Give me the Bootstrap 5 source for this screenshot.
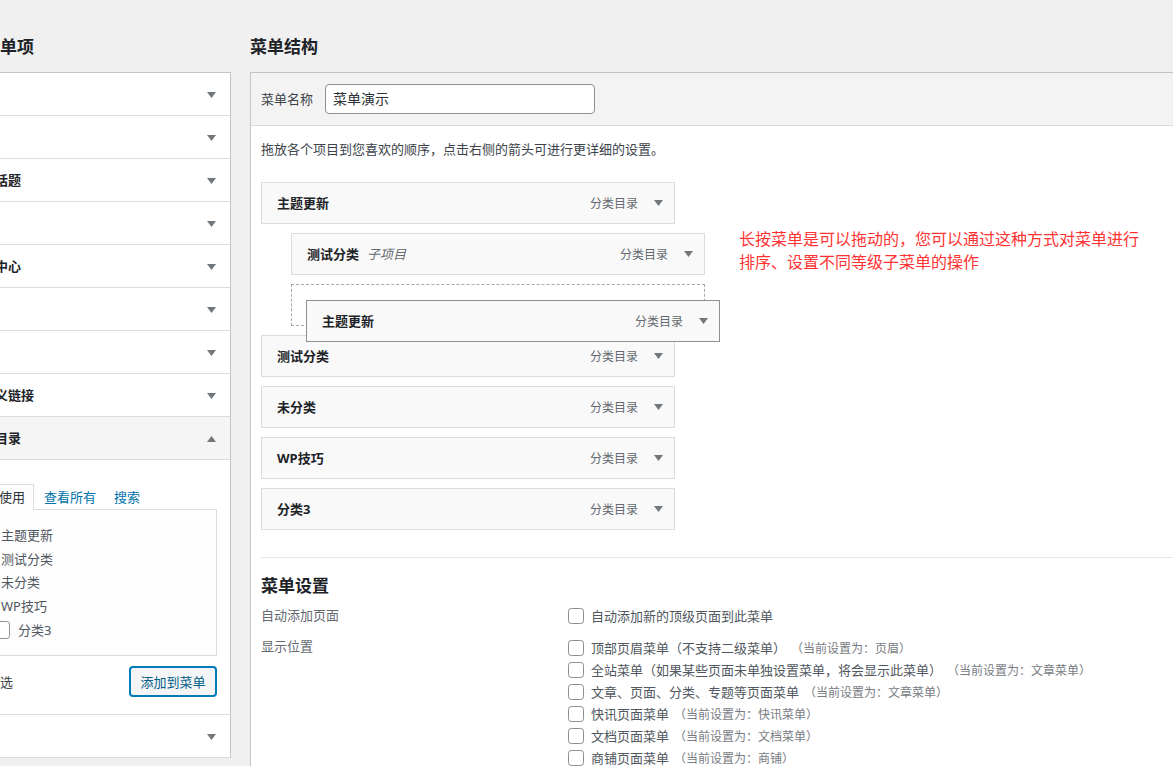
<!doctype html>
<html lang="zh-CN"><head><meta charset="utf-8"><title>菜单</title>
<link href="https://cdn.jsdelivr.net/npm/bootstrap@5.3.0/dist/css/bootstrap.min.css" rel="stylesheet">
<style>
html,body{height:766px;overflow:hidden;margin:0}
body{background:#f0f0f1;color:#3c434a;font:13px/19px "Noto Sans","Noto Sans CJK SC",sans-serif}
.stage{width:1173px;height:766px;overflow:hidden;gap:19px;padding-top:35px}
.sidecol{width:273px;margin-left:-42px;flex:none}
.maincol{width:1000px;flex:none}
.coltitle{font-size:17px;font-weight:700;line-height:24px;color:#1d2327;margin:0 0 13px;white-space:nowrap}
.sidecol .coltitle{margin-left:-9px}
.sidebox{background:#fff;border:1px solid #c3c4c7;border-width:1px 1px 0 0}
.acc{height:43px;border-bottom:1px solid #dcdcde;padding:0 14px 0 11px;font-weight:700;color:#1d2327;line-height:41px}
.acc .arrow{margin-top:1px}
.acc.open{background:#f5f5f5}
.arrow{width:9px;height:6px;fill:#72777c;flex:none}
.accbody{height:255px;border-bottom:1px solid #dcdcde;padding:24px 13px 0 14px;position:relative}
.tabrow{height:25px;gap:10px;align-items:flex-end}
.tabon{width:62px;height:26px;border:1px solid #dcdcde;border-bottom:0;background:#fdfdfd;line-height:24px;text-align:right;padding-right:8px;margin-bottom:-1px;position:relative;color:#2c3338;white-space:nowrap}
.tablink{color:#0073aa;text-decoration:none;padding:0 8px 0 0;line-height:24px;white-space:nowrap}
.tabbox{height:147px;background:#fdfdfd;border:1px solid #dcdcde;padding:13px 0 0 28px;color:#50575e}
.termline{height:23.7px;line-height:24px;white-space:nowrap}
.termline.pick{margin-left:17px}
.sq{width:18px;height:18px;border:1px solid #8c8f94;border-radius:4px;margin:0;background-color:#fff;flex:none}
.termline .sq{margin-left:-26px;margin-right:8px}
.foot{margin-top:10px;align-items:center;justify-content:space-between}
.allpick{white-space:nowrap;margin-left:15px;padding-top:2px}
.addbtn{width:88px;height:31px;padding:0;border:2px solid #007cba;border-radius:4px;background:#f3f5f6;color:#016087;font-size:13px;line-height:26px;white-space:nowrap}
.addbtn:hover{background:#f3f5f6;color:#016087;border-color:#007cba}
.mainbox{background:#fff;border:1px solid #c3c4c7;border-width:1px 0 0 1px;height:800px}
.namebar{height:53px;background:#f3f3f3;border-bottom:1px solid #dcdcde;padding:0 10px;gap:12px;align-items:center}
.nameinput{width:270px;height:30px;padding:0 7px 2px;border:1px solid #8c8f94;border-radius:4px;font-size:14px;line-height:26px;color:#2c3338;flex:none}
.mainpad{padding:14px 0 0 10px;position:relative}
.hint{margin:0 0 23px;line-height:19px;color:#3c434a}
.treewrap{position:relative;width:444px;flex:none}
.entry{width:414px;height:42px;background:#f9f9f9;border:1px solid #dcdcde;padding:0 11px 0 15px;margin-bottom:9px;align-items:center;font-weight:700;color:#1d2327;line-height:19px}
.entry.kid{margin-left:30px}
.entry .kidtag{font-weight:400;font-style:italic;color:#646970;font-size:13px;margin-left:8px}
.entry .kindtag{font-weight:400;font-size:12px;color:#646970;margin-left:auto;margin-right:16px}
.gap-slot{width:414px;height:42px;margin:0 0 9px 30px;border:1px dashed #a7aaad}
.dragged{position:absolute;left:45px;top:118px;width:414px;margin:0;border-color:#8c8f94;z-index:2}
.redsay{color:#f33;font-size:16px;line-height:23px;width:405px;margin:46px 0 0 34px}
.rule{height:0;border-top:1px solid #e4e5e7;margin:18px 0 16px;width:1000px}
.settitle{font-size:17px;font-weight:700;line-height:24px;color:#1d2327;margin:0 0 7px}
.setrow{display:flex;margin-bottom:10px}
.setlabel{width:307px;flex:none;color:#646970;line-height:18px;padding-top:1px}
.setlabel.lower{padding-top:0}
.setvals{display:flex;flex-direction:column}
.opt{height:22px;display:flex;align-items:center;gap:7px;white-space:nowrap;color:#50575e}
.opt .sq{width:16px;height:16px}
.opt em{font-style:normal;font-size:12px;color:#787c82;margin-left:-2px}
</style></head>
<body>
<div class="stage d-flex">
 <div class="sidecol">
  <h2 class="coltitle">添加菜单项</h2>
  <div class="sidebox">
   <div class="acc d-flex align-items-center justify-content-between"><span>页面</span><svg class="arrow" viewBox="0 0 9 6"><polygon points="0,0 9,0 4.5,6"/></svg></div>
   <div class="acc d-flex align-items-center justify-content-between"><span>文章</span><svg class="arrow" viewBox="0 0 9 6"><polygon points="0,0 9,0 4.5,6"/></svg></div>
   <div class="acc d-flex align-items-center justify-content-between"><span>专题话题</span><svg class="arrow" viewBox="0 0 9 6"><polygon points="0,0 9,0 4.5,6"/></svg></div>
   <div class="acc d-flex align-items-center justify-content-between"><span>快讯</span><svg class="arrow" viewBox="0 0 9 6"><polygon points="0,0 9,0 4.5,6"/></svg></div>
   <div class="acc d-flex align-items-center justify-content-between"><span>文档中心</span><svg class="arrow" viewBox="0 0 9 6"><polygon points="0,0 9,0 4.5,6"/></svg></div>
   <div class="acc d-flex align-items-center justify-content-between"><span>商品</span><svg class="arrow" viewBox="0 0 9 6"><polygon points="0,0 9,0 4.5,6"/></svg></div>
   <div class="acc d-flex align-items-center justify-content-between"><span>商铺</span><svg class="arrow" viewBox="0 0 9 6"><polygon points="0,0 9,0 4.5,6"/></svg></div>
   <div class="acc d-flex align-items-center justify-content-between"><span>自定义链接</span><svg class="arrow" viewBox="0 0 9 6"><polygon points="0,0 9,0 4.5,6"/></svg></div>
   <div class="acc open d-flex align-items-center justify-content-between"><span>分类目录</span><svg class="arrow" viewBox="0 0 9 6"><polygon points="0,6 9,6 4.5,0"/></svg></div>
   <div class="accbody">
    <div class="tabrow d-flex"><span class="tabon">最近使用</span><a class="tablink" href="#">查看所有</a><a class="tablink" href="#">搜索</a></div>
    <div class="tabbox">
     <div class="termline">主题更新</div>
     <div class="termline">测试分类</div>
     <div class="termline">未分类</div>
     <div class="termline">WP技巧</div>
     <div class="termline pick d-flex align-items-center"><input class="form-check-input sq" type="checkbox">分类3</div>
    </div>
    <div class="foot d-flex"><span class="allpick">全选</span><button class="btn addbtn" type="button">添加到菜单</button></div>
   </div>
   <div class="acc d-flex align-items-center justify-content-between"><span>标签</span><svg class="arrow" viewBox="0 0 9 6"><polygon points="0,0 9,0 4.5,6"/></svg></div>
  </div>
 </div>
 <div class="maincol">
  <h2 class="coltitle">菜单结构</h2>
  <div class="mainbox">
   <div class="namebar d-flex"><span>菜单名称</span><input class="form-control nameinput" value="菜单演示"></div>
   <div class="mainpad">
    <p class="hint">拖放各个项目到您喜欢的顺序，点击右侧的箭头可进行更详细的设置。</p>
    <div class="d-flex">
     <div class="treewrap">
      <div class="entry d-flex">主题更新<span class="kindtag">分类目录</span><svg class="arrow" viewBox="0 0 9 6"><polygon points="0,0 9,0 4.5,6"/></svg></div>
      <div class="entry kid d-flex">测试分类<span class="kidtag">子项目</span><span class="kindtag">分类目录</span><svg class="arrow" viewBox="0 0 9 6"><polygon points="0,0 9,0 4.5,6"/></svg></div>
      <div class="gap-slot"></div>
      <div class="entry dragged d-flex">主题更新<span class="kindtag">分类目录</span><svg class="arrow" viewBox="0 0 9 6"><polygon points="0,0 9,0 4.5,6"/></svg></div>
      <div class="entry d-flex">测试分类<span class="kindtag">分类目录</span><svg class="arrow" viewBox="0 0 9 6"><polygon points="0,0 9,0 4.5,6"/></svg></div>
      <div class="entry d-flex">未分类<span class="kindtag">分类目录</span><svg class="arrow" viewBox="0 0 9 6"><polygon points="0,0 9,0 4.5,6"/></svg></div>
      <div class="entry d-flex">WP技巧<span class="kindtag">分类目录</span><svg class="arrow" viewBox="0 0 9 6"><polygon points="0,0 9,0 4.5,6"/></svg></div>
      <div class="entry d-flex">分类3<span class="kindtag">分类目录</span><svg class="arrow" viewBox="0 0 9 6"><polygon points="0,0 9,0 4.5,6"/></svg></div>
     </div>
     <div class="redsay">长按菜单是可以拖动的，您可以通过这种方式对菜单进行排序、设置不同等级子菜单的操作</div>
    </div>
    <div class="rule"></div>
    <h3 class="settitle">菜单设置</h3>
    <div class="setrow"><div class="setlabel">自动添加页面</div><div class="setvals"><label class="opt"><input class="form-check-input sq" type="checkbox">自动添加新的顶级页面到此菜单</label></div></div>
    <div class="setrow"><div class="setlabel lower">显示位置</div><div class="setvals">
     <label class="opt"><input class="form-check-input sq" type="checkbox">顶部页眉菜单（不支持二级菜单）<em>（当前设置为：页眉）</em></label>
     <label class="opt"><input class="form-check-input sq" type="checkbox">全站菜单（如果某些页面未单独设置菜单，将会显示此菜单）<em>（当前设置为：文章菜单）</em></label>
     <label class="opt"><input class="form-check-input sq" type="checkbox">文章、页面、分类、专题等页面菜单<em>（当前设置为：文章菜单）</em></label>
     <label class="opt"><input class="form-check-input sq" type="checkbox">快讯页面菜单<em>（当前设置为：快讯菜单）</em></label>
     <label class="opt"><input class="form-check-input sq" type="checkbox">文档页面菜单<em>（当前设置为：文档菜单）</em></label>
     <label class="opt"><input class="form-check-input sq" type="checkbox">商铺页面菜单<em>（当前设置为：商铺）</em></label>
    </div></div>
   </div>
  </div>
 </div>
</div>
</body></html>
